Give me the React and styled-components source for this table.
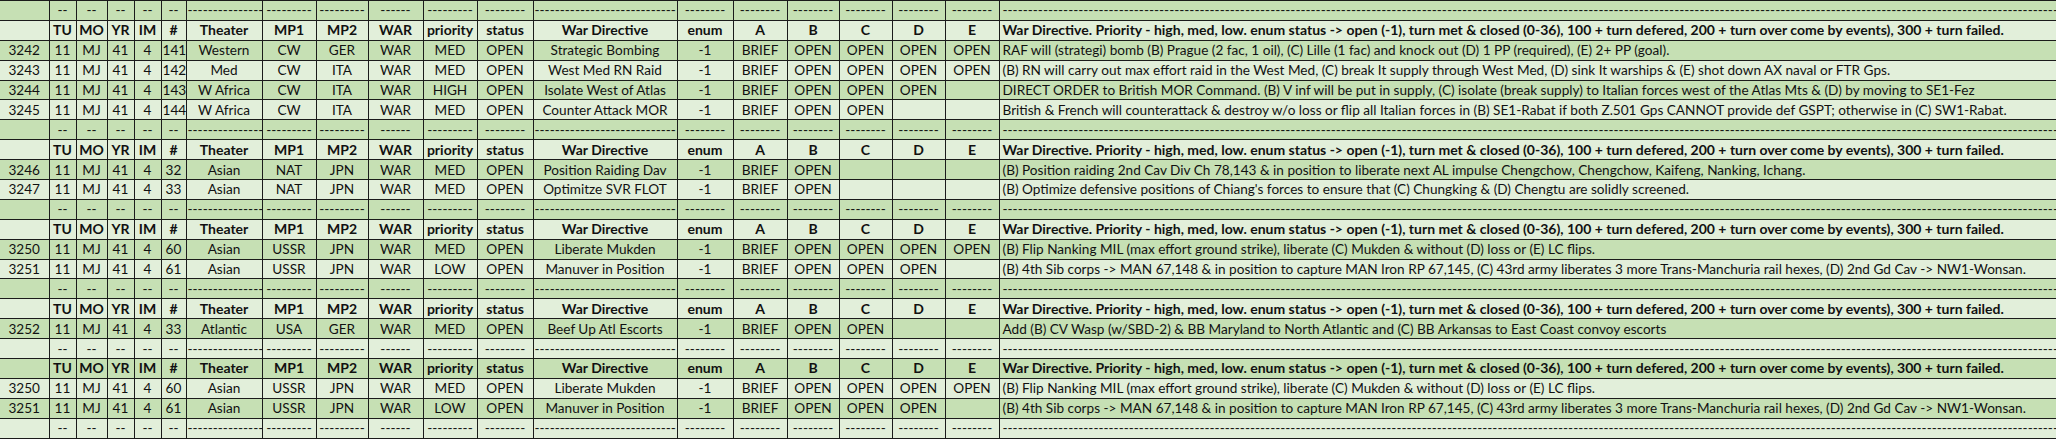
import styled, { createGlobalStyle } from "styled-components";

const GlobalStyle = createGlobalStyle`
  html, body {
    margin: 0;
    padding: 0;
    background: #ffffff;
  }
  body {
    font-family: Lato, "Liberation Sans", sans-serif;
    overflow: hidden;
  }
`;

const Sheet = styled.table`
  border-collapse: collapse;
  table-layout: fixed;
  width: 2056px;
  font-family: Lato, "Liberation Sans", sans-serif;
  color: #111;
`;

const Row = styled.tr`
  height: 19.9px;
  background: ${(p) => (p.$dark ? "#c6e0b4" : "#e2efda")};
  font-weight: ${(p) => (p.$bold ? 700 : 400)};
  font-size: ${(p) => (p.$bold ? "14px" : "13.6px")};
`;

const Cell = styled.td`
  border: 1px solid #1b1b1b;
  padding: ${(p) => (p.$align === "left" ? "0 3px" : "0 1px")};
  height: 18px;
  line-height: 18px;
  white-space: nowrap;
  overflow: hidden;
  text-align: ${(p) => p.$align || "center"};
  &:first-child {
    border-left: none;
  }
`;

const COLS = [49, 27, 31, 27, 27, 25, 76, 54, 52, 55, 54, 56, 144, 56, 54, 52, 53, 53, 54, 1057];

const d = (n) => "-".repeat(n);
const DASHES = ["", d(2), d(2), d(2), d(2), d(2), d(15), d(9), d(9), d(6), d(9), d(8), d(28), d(8), d(8), d(8), d(8), d(8), d(8), d(220)];

const HEAD = [
  "", "TU", "MO", "YR", "IM", "#", "Theater", "MP1", "MP2", "WAR", "priority", "status",
  "War Directive", "enum", "A", "B", "C", "D", "E",
  "War Directive.  Priority - high, med, low.  enum status -> open (-1),  turn met & closed (0-36),  100 + turn defered, 200 + turn over come by events),  300 + turn failed.",
];

const base = ["11", "MJ", "41", "4"];

const DATA = {
  3242: ["3242", ...base, "141", "Western", "CW", "GER", "WAR", "MED", "OPEN", "Strategic Bombing", "-1", "BRIEF", "OPEN", "OPEN", "OPEN", "OPEN",
    "RAF will (strategi) bomb (B) Prague (2 fac, 1 oil), (C) Lille (1 fac) and knock out (D) 1 PP (required), (E) 2+ PP (goal)."],
  3243: ["3243", ...base, "142", "Med", "CW", "ITA", "WAR", "MED", "OPEN", "West Med RN Raid", "-1", "BRIEF", "OPEN", "OPEN", "OPEN", "OPEN",
    "(B) RN will carry out max effort raid in the West Med, (C) break It supply through West Med, (D) sink It warships & (E) shot down AX naval or FTR Gps."],
  3244: ["3244", ...base, "143", "W Africa", "CW", "ITA", "WAR", "HIGH", "OPEN", "Isolate West of Atlas", "-1", "BRIEF", "OPEN", "OPEN", "OPEN", "",
    "DIRECT ORDER to British MOR Command.  (B) V inf will be put in supply, (C) isolate (break supply) to  Italian forces west of the Atlas Mts & (D) by moving to SE1-Fez"],
  3245: ["3245", ...base, "144", "W Africa", "CW", "ITA", "WAR", "MED", "OPEN", "Counter Attack MOR", "-1", "BRIEF", "OPEN", "OPEN", "", "",
    "British & French will counterattack & destroy w/o loss or flip all Italian forces in (B) SE1-Rabat if both Z.501 Gps CANNOT provide def GSPT; otherwise in (C) SW1-Rabat."],
  3246: ["3246", ...base, "32", "Asian", "NAT", "JPN", "WAR", "MED", "OPEN", "Position Raiding Dav", "-1", "BRIEF", "OPEN", "", "", "",
    "(B) Position raiding 2nd Cav Div Ch 78,143 & in position to liberate next AL impulse Chengchow, Chengchow, Kaifeng, Nanking, Ichang."],
  3247: ["3247", ...base, "33", "Asian", "NAT", "JPN", "WAR", "MED", "OPEN", "Optimitze SVR FLOT", "-1", "BRIEF", "OPEN", "", "", "",
    "(B) Optimize defensive positions of Chiang's forces to ensure that (C) Chungking & (D) Chengtu are solidly screened."],
  3250: ["3250", ...base, "60", "Asian", "USSR", "JPN", "WAR", "MED", "OPEN", "Liberate Mukden", "-1", "BRIEF", "OPEN", "OPEN", "OPEN", "OPEN",
    "(B) Flip Nanking MIL (max effort ground strike), liberate (C) Mukden & without (D) loss or (E) LC flips."],
  3251: ["3251", ...base, "61", "Asian", "USSR", "JPN", "WAR", "LOW", "OPEN", "Manuver in Position", "-1", "BRIEF", "OPEN", "OPEN", "OPEN", "",
    "(B) 4th Sib corps -> MAN 67,148 & in position to capture MAN Iron RP 67,145, (C) 43rd army liberates 3 more Trans-Manchuria rail hexes, (D) 2nd Gd Cav -> NW1-Wonsan."],
  3252: ["3252", ...base, "33", "Atlantic", "USA", "GER", "WAR", "MED", "OPEN", "Beef Up Atl Escorts", "-1", "BRIEF", "OPEN", "OPEN", "", "",
    "Add (B) CV Wasp (w/SBD-2) & BB Maryland to North Atlantic and (C) BB Arkansas to East Coast convoy escorts"],
};

const LAYOUT = [
  "dash", "head", 3242, 3243, 3244, 3245,
  "dash", "head", 3246, 3247,
  "dash", "head", 3250, 3251,
  "dash", "head", 3252,
  "dash", "head", 3250, 3251,
  "dash",
];

function cellsFor(kind) {
  if (kind === "dash") return DASHES;
  if (kind === "head") return HEAD;
  return DATA[kind];
}

export default function App() {
  return (
    <>
      <GlobalStyle />
      <Sheet>
        <colgroup>
          {COLS.map((w, i) => (
            <col key={i} style={{ width: w }} />
          ))}
        </colgroup>
        <tbody>
          {LAYOUT.map((kind, r) => (
            <Row key={r} $dark={r % 2 === 0} $bold={kind === "head"}>
              {cellsFor(kind).map((txt, c) => (
                <Cell key={c} $align={c === COLS.length - 1 ? "left" : "center"}>
                  {txt}
                </Cell>
              ))}
            </Row>
          ))}
        </tbody>
      </Sheet>
    </>
  );
}
